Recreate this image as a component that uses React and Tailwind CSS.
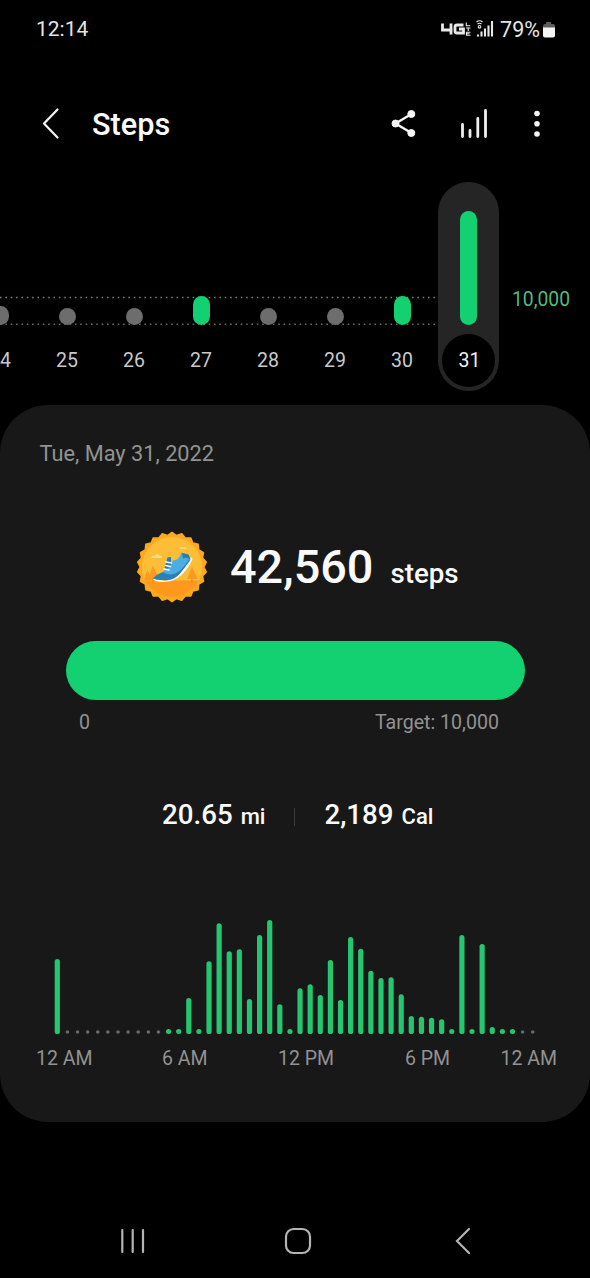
const days = [
  { day: '24', height: 19 },
  { day: '25', height: 17 },
  { day: '26', height: 17 },
  { day: '27', height: 29, reached: true },
  { day: '28', height: 17 },
  { day: '29', height: 17 },
  { day: '30', height: 29, reached: true },
]

// one entry per half hour, 0 = no activity
const activity = [
  75, 0, 0, 0, 0, 0, 0, 0, 0, 0, 0, 5,
  5, 36, 5, 72.7, 110.7, 82.7, 84.7, 35, 99, 114, 29.7, 5,
  45.7, 49.7, 39, 74, 34, 97, 85.3, 63.3, 56, 56.7, 39.7, 18,
  17.3, 16.3, 14.7, 5, 99, 5, 90, 7, 5, 5, 0, 0,
]

function StatusBar() {
  return (
    <div className="flex h-[59px] items-center justify-between pl-9 pr-[34px] text-[21px] text-[#e4e4e4]">
      <span className="pt-px">12:14</span>
      <div className="flex items-center">
        <svg className="mb-0.5" width="57" height="24" viewBox="0 0 57 24" fill="none" stroke="#e8e8e8">
          <path d="M2.500 6.500v6.500h10M11 6.500v11M23.500 8h-6.500q-2 0-2 2v4q0 2 2 2h6.500v-4h-4.500" strokeWidth="2.800" />
          <path d="M26.300 5.500v3.200h4M26 11h4.500M28.200 11v3M30.500 15.200h-4v3h4M26.500 16.700h3" strokeWidth="1.100" />
          <path d="M38 19.500v-2M41.500 19.500v-5M45 19.500v-8M48.500 19.500v-11M52 19.500V4" strokeWidth="2.100" />
          <path d="M36.500 5q3-2.500 6 0M37.500 7q2-1.500 4 0" strokeWidth="1.200" />
          <circle cx="39.500" cy="9.800" r="1.300" strokeWidth="1.100" />
        </svg>
        <span className="ml-[3px] text-[21.500px] leading-6">79%</span>
        <svg className="ml-0.5" width="14" height="20" viewBox="0 0 14 20">
          <path d="M4 2h5v2h2q2 0 2 2v2H1V6q0-2 2-2h1z" fill="#5c5c5c" />
          <path d="M1 7.500h12v8q0 2-2 2H3q-2 0-2-2z" fill="#f4f4f4" />
        </svg>
      </div>
    </div>
  )
}

function Header() {
  return (
    <header className="flex h-[123px] items-center pl-[40px] pt-[6px]">
      <svg width="22" height="34" viewBox="0 0 22 34" fill="none" stroke="#f5f5f5" strokeWidth="2.200" strokeLinecap="round" strokeLinejoin="round">
        <path d="M17.500 2.500 4 16.500l13.500 14" />
      </svg>
      <h1 className="ml-[30px] mt-[3px] text-[30.700px] font-medium text-[#fafafa]">Steps</h1>
      <svg className="ml-auto mr-[41px]" width="28" height="30" viewBox="0 0 28 30" fill="#f5f5f5" stroke="#f5f5f5">
        <path d="M21.500 5 5.500 14.500l16 9.500" fill="none" strokeWidth="2.400" />
        <circle cx="5.500" cy="14.500" r="3.500" />
        <circle cx="21.300" cy="5" r="3.500" />
        <circle cx="21.300" cy="24" r="3.500" />
      </svg>
      <svg className="mr-[42px]" width="30" height="32" viewBox="0 0 30 32" fill="none" stroke="#efefef" strokeWidth="2.800" strokeLinecap="round">
        <path d="M3.500 16.500v12M11 22.500v6M18.800 10.500v18M26.500 2.500v26" />
      </svg>
      <svg className="mr-[47px]" width="12" height="30" viewBox="0 0 12 30" fill="#f5f5f5">
        <circle cx="6" cy="4.500" r="2.800" />
        <circle cx="6" cy="14.700" r="2.800" />
        <circle cx="6" cy="25" r="2.800" />
      </svg>
    </header>
  )
}

function WeekChart() {
  return (
    <section className="relative flex h-[223px] text-[19.500px] text-[#c9c9c9]">
      <svg className="absolute left-0 top-[114px]" width="440" height="30" fill="none" strokeWidth="1.500" strokeDasharray="1.600 3.750">
        <path d="M0 1.500h440" stroke="#5f9068" />
        <path d="M0 28.200h440" stroke="#646a66" />
      </svg>
      <div className="relative -ml-[33.500px] flex">
        {days.map(d => (
          <div key={d.day} className="flex h-[209px] w-[67px] flex-col items-center justify-end">
            <div
              className={d.reached ? 'w-[17px] rounded-full bg-[#13d170]' : 'w-[17px] rounded-full bg-[#6d6d6d]'}
              style={{ height: d.height }}
            />
            <span className="flex h-[66px] items-center pt-[5px]">{d.day}</span>
          </div>
        ))}
      </div>
      <div className="relative ml-[2.500px] flex h-[209px] w-[61px] flex-col items-center rounded-full bg-[#252525] pt-[29px]">
        <div className="h-[114px] w-[17px] rounded-full bg-[#13d170]" />
        <div className="mt-[9px] flex size-[53px] items-center justify-center rounded-full bg-black pl-0.5 text-[#f0f0f0]">31</div>
      </div>
      <span className="ml-[13px] mt-[103px] text-[19.300px] leading-[30px] text-[#55b97c]">10,000</span>
    </section>
  )
}

function Badge() {
  const points = Array.from({ length: 44 }, (_, i) => {
    const r = i % 2 ? 31.8 : 34.6
    const a = (i * Math.PI) / 22 - Math.PI / 2
    return `${36 + r * Math.cos(a)},${36 + r * Math.sin(a)}`
  }).join(' ')

  return (
    <svg width="72" height="72" viewBox="0 0 72 72">
      <defs>
        <clipPath id="disc">
          <circle cx="36" cy="36" r="30" />
        </clipPath>
      </defs>
      <polygon points={points} fill="#fba91f" stroke="#fba91f" strokeWidth="1.500" strokeLinejoin="round" />
      <circle cx="36" cy="36" r="30" fill="#fdbd36" />
      <g clipPath="url(#disc)">
        <path d="M5 49.500h62V68H5z" fill="#ff981c" />
        <path d="M11.500 39 7.500 49.500h8zM17 34.500l-5.500 15h12zM56 35.500l-5 12.500h10.500z" fill="#fb9a20" />
        <path d="M55.500 48h1v4h-1zM16.500 48h1v3h-1z" fill="#e98218" />
      </g>
      <path d="M15 27q1-3 4-2.500 2-3 4.500 0 2.500 0 2.500 2.500zM43 17.500q1.500-2 4-1.500 3 0 4 2z" fill="#fddb8c" />
      <path d="M16.500 47.500q8 3 16 1.500 8-2 12-8 5-9 10.500-14.500 2.500 0 .5 4-5 9-10.500 14-7 6-17 6.500-9 .5-11.500-3.500z" fill="#fafaf2" />
      <path d="M17 47.500q4-4.500 10-6.500l5-5.500 5-6q6 0 8.500-8l7 2.500 2 4.500q-5 7-10 12.500-5 6-11 7.500-8 1.500-16.500-1z" fill="#4bade6" />
      <path d="M17 47.500q4-4.500 10-6.500 5 4 12 1.500 7-3 14-14l1 1q-5 7-10 13-5 5.500-11 6.500-8 1-16-1.500z" fill="#2a81b8" />
      <path d="m31.500 26.500 3.500-.5v8l-4 4-2.500-1zM46 22l6.500 1.500 2 5-4.500-2-3 1z" fill="#277ea8" />
      <path d="m30 31 5.500 1M29.500 34.500l5 1M27.500 38l5.500 1" fill="none" stroke="#fff" strokeWidth="1.500" strokeLinecap="round" />
    </svg>
  )
}

function ActivityChart() {
  return (
    <svg className="mt-[62px] block" width="590" height="136" viewBox="0 0 590 136">
      {activity.map((h, i) => {
        const x = 57.300 + i * 10.115
        return h
          ? <rect key={i} x={x - 2.600} y={134 - h} width="5.200" height={h} rx="2.600" fill="#25c670" />
          : <circle key={i} cx={x} cy="132" r="1.800" fill="#696969" />
      })}
    </svg>
  )
}

function DayCard() {
  return (
    <main className="h-[717px] rounded-[48px] bg-[#181818]">
      <p className="pl-[39.500px] pt-8 text-[21.750px] leading-[33px] text-[#929292]">Tue, May 31, 2022</p>
      <div className="ml-[136px] mt-[60px] flex h-[74px] items-center text-[#fafafa]">
        <Badge />
        <div className="ml-[22px] flex items-baseline font-medium">
          <span className="text-[46.800px] leading-[56px]">42,560</span>
          <span className="ml-[17px] text-[27.700px]">steps</span>
        </div>
      </div>
      <div className="mx-auto mt-[37px] h-[59px] w-[459px] rounded-full bg-[#13d170]" />
      <div className="ml-[79px] mr-[91px] mt-2 flex justify-between text-[19.600px] leading-[30px] text-[#929292]">
        <span>0</span>
        <span>Target: 10,000</span>
      </div>
      <div className="ml-[162px] mt-[55px] flex h-[44px] items-center font-medium text-[#fafafa]">
        <div className="flex items-baseline">
          <span className="text-[27.700px]">20.65</span>
          <span className="ml-2 text-[22px]">mi</span>
        </div>
        <div className="mx-[29px] mt-[3px] h-[18px] w-px bg-[#3b3b3b]" />
        <div className="flex items-baseline">
          <span className="text-[27.700px]">2,189</span>
          <span className="ml-2 text-[22px]">Cal</span>
        </div>
      </div>
      <div className="pt-px">
        <ActivityChart />
      </div>
      <div className="ml-9 mr-[33px] mt-[8px] flex text-[19.500px] leading-[30px] text-[#929292]">
        <span className="w-[126px]">12 AM</span>
        <span className="w-[116px]">6 AM</span>
        <span className="w-[127px]">12 PM</span>
        <span>6 PM</span>
        <span className="ml-auto">12 AM</span>
      </div>
    </main>
  )
}

function NavBar() {
  return (
    <nav className="mt-[103px] flex h-[32px] items-center pl-[118px]">
      <svg width="30" height="30" fill="none" stroke="#b4b4b4" strokeWidth="2.200" strokeLinecap="round">
        <path d="M4.300 4v22M14.700 4v22M25 4v22" />
      </svg>
      <svg className="ml-[135px]" width="30" height="30" fill="none" stroke="#b4b4b4" strokeWidth="2.200">
        <rect x="3" y="3" width="24" height="24" rx="7.500" />
      </svg>
      <svg className="ml-[140px]" width="20" height="30" fill="none" stroke="#b4b4b4" strokeWidth="2.200" strokeLinecap="round">
        <path d="M16 3 4 15l12 12" />
      </svg>
    </nav>
  )
}

export default function App() {
  return (
    <div className="h-[1278px] w-[590px] overflow-hidden bg-black font-[Roboto,sans-serif]">
      <StatusBar />
      <Header />
      <WeekChart />
      <DayCard />
      <NavBar />
    </div>
  )
}
